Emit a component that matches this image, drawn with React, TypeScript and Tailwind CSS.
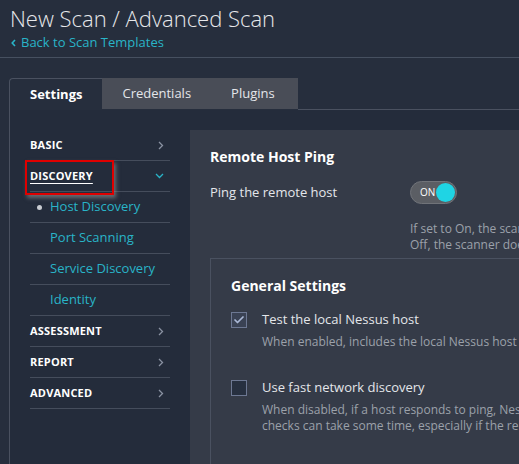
import { Check } from "lucide-react";

const menu = [
  { label: "BASIC", kind: "section" },
  { label: "DISCOVERY", kind: "open" },
  { label: "Host Discovery", kind: "sub", active: true },
  { label: "Port Scanning", kind: "sub" },
  { label: "Service Discovery", kind: "sub" },
  { label: "Identity", kind: "sub" },
  { label: "ASSESSMENT", kind: "section" },
  { label: "REPORT", kind: "section" },
  { label: "ADVANCED", kind: "section" },
];

function ChevronRight() {
  return (
    <svg width="6" height="9" viewBox="0 0 6 9" className="text-[#8a92a2]">
      <path d="M1 1l3.5 3.5L1 8" fill="none" stroke="currentColor" strokeWidth="1.3" />
    </svg>
  );
}

function ChevronDown() {
  return (
    <svg width="9" height="6" viewBox="0 0 9 6" className="text-[#29b4c8]">
      <path d="M1 1l3.5 3.5L8 1" fill="none" stroke="currentColor" strokeWidth="1.3" />
    </svg>
  );
}

function Sidebar() {
  return (
    <div className="w-[140px] shrink-0">
      {menu.map((m) =>
        m.kind === "sub" ? (
          <div
            key={m.label}
            className="h-[31px] border-b border-[#454d5c] flex items-center relative pl-[20px] text-[13px] text-[#29b4c8]"
          >
            {m.active && (
              <span className="absolute left-[7px] top-[13px] w-[5px] h-[5px] rounded-full bg-[#c9ccd2]" />
            )}
            {m.label}
          </div>
        ) : (
          <div
            key={m.label}
            className="h-[31px] border-b border-[#454d5c] flex items-center justify-between pr-[6px] text-[11px] font-bold text-white tracking-[0.2px]"
          >
            <span className={m.kind === "open" ? "underline underline-offset-[3px]" : ""}>
              {m.label}
            </span>
            {m.kind === "open" ? <ChevronDown /> : <ChevronRight />}
          </div>
        )
      )}
    </div>
  );
}

function CheckRow({
  checked,
  label,
  lines,
}: {
  checked: boolean;
  label: string;
  lines: string[];
}) {
  return (
    <div>
      <div className="flex items-center h-[20px]">
        <div
          className={`w-[16px] h-[16px] border border-[#6d7893] flex items-center justify-center ${
            checked ? "bg-[#3a4254]" : "bg-[#273040]"
          }`}
        >
          {checked && <Check size={12} strokeWidth={3.5} className="text-[#aab8d6]" />}
        </div>
        <span className="ml-[15px] text-[13px] text-[#e4e6ea]">{label}</span>
      </div>
      <div className="ml-[31px] mt-[4px] text-[12px] leading-[16px] text-[#9ca1aa] whitespace-nowrap">
        {lines.map((l) => (
          <div key={l}>{l}</div>
        ))}
      </div>
    </div>
  );
}

function Panel() {
  return (
    <div className="w-[520px] shrink-0 overflow-hidden bg-[#353b48] pl-[20px] pt-[17px] h-[400px]">
      <div className="text-[14px] font-bold leading-[20px] text-white">Remote Host Ping</div>
      <div className="flex items-center mt-[14px]">
        <div className="w-[200px] text-[13px] text-[#e4e6ea]">Ping the remote host</div>
        <div className="w-[47px] h-[23px] rounded-full bg-[#5b5e64] border border-[#707379] flex items-center justify-between pl-[9px] pr-[1px]">
          <span className="text-[10px] text-white">ON</span>
          <span className="w-[19px] h-[19px] rounded-full bg-[#1fd4e4]" />
        </div>
      </div>
      <div className="ml-[200px] mt-[17px] text-[12px] leading-[16px] text-[#9ca1aa] whitespace-nowrap overflow-hidden">
        <div>If set to On, the scanner pings remote hosts on multiple ports to determine if they are alive.</div>
        <div>Off, the scanner does not ping remote hosts on multiple ports during the scan.</div>
      </div>
      <div className="mt-[5px] border border-[#4a5160] h-[260px] pl-[20px] pt-[17px] overflow-hidden">
        <div className="text-[14px] font-bold leading-[20px] text-white">General Settings</div>
        <div className="mt-[14px]">
          <CheckRow
            checked
            label="Test the local Nessus host"
            lines={["When enabled, includes the local Nessus host in the scan."]}
          />
        </div>
        <div className="mt-[28px]">
          <CheckRow
            checked={false}
            label="Use fast network discovery"
            lines={[
              "When disabled, if a host responds to ping, Nessus attempts to avoid false positives. These",
              "checks can take some time, especially if the remote host is behind a firewall.",
            ]}
          />
        </div>
      </div>
    </div>
  );
}

export default function App() {
  return (
    <div className="w-[519px] h-[464px] overflow-hidden relative bg-[#262e3d] font-['Open_Sans',sans-serif]">
      <div className="h-[58px] border-b border-[#465060] pl-[10px] pt-[3px]">
        <h1 className="text-[22px] font-light leading-[30px] text-[#e6e8eb] whitespace-nowrap">
          New Scan / Advanced Scan
        </h1>
        <div className="mt-[2px] flex items-center h-[16px] text-[13px] text-[#29b4c8]">
          <svg width="5" height="8" viewBox="0 0 5 8" className="mr-[5px] ml-[1px]">
            <path d="M4 1L1.2 4 4 7" fill="none" stroke="currentColor" strokeWidth="1.6" />
          </svg>
          Back to Scan Templates
        </div>
      </div>

      <div className="pl-[9px] mt-[20px]">
        <div className="flex items-start h-[32px]">
          <div className="h-[32px] px-[20px] border-l border-t border-[#4a5160] rounded-tl-[4px] flex items-center text-[13px] font-bold text-white">
            Settings
          </div>
          <div className="h-[31px] px-[20px] bg-[#494d57] flex items-center text-[13px] text-[#e4e6ea]">
            Credentials
          </div>
          <div className="h-[31px] pl-[20px] pr-[23px] bg-[#494d57] flex items-center text-[13px] text-[#e4e6ea]">
            Plugins
          </div>
          <div className="flex-1 h-[32px] border-b border-[#4a5160]" />
        </div>

        <div className="flex border-l border-[#4a5160] bg-[#242c3b] h-[360px] pl-[20px] pt-[20px] gap-[20px]">
          <Sidebar />
          <Panel />
        </div>
      </div>

      <div className="absolute left-[25px] top-[160px] w-[89px] h-[35px] border-2 border-[#e00000] shadow-[2px_3px_4px_rgba(150,150,150,0.6)]" />
    </div>
  );
}
